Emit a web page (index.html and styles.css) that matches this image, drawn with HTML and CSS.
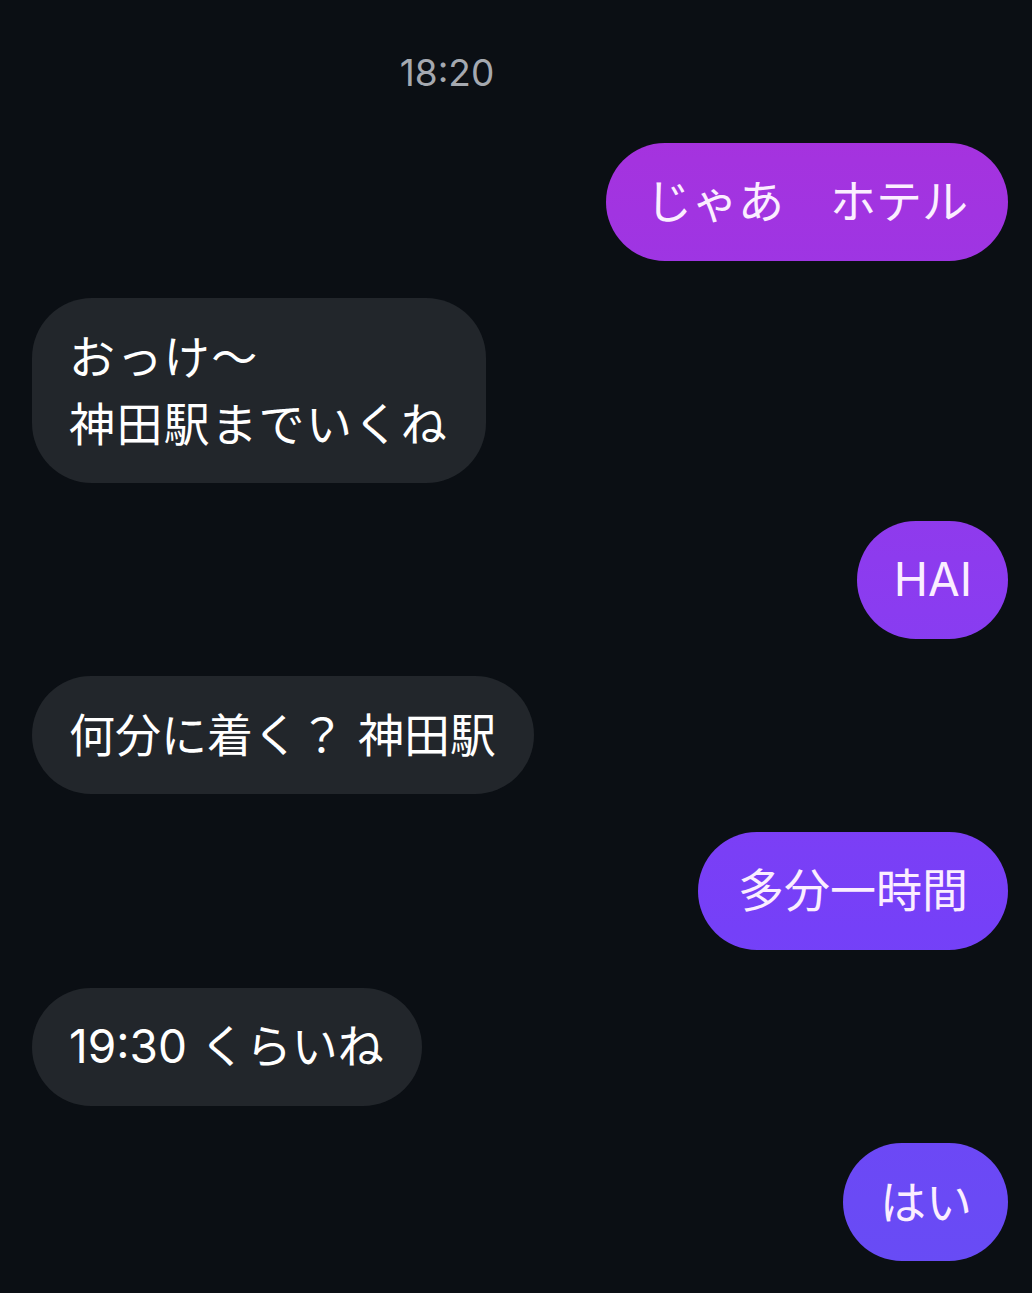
FILE: index.html
```html
<!DOCTYPE html>
<html lang="ja">
<head>
    <meta charset="utf-8">
    <meta name="viewport" content="width=device-width, initial-scale=1.0">
    <title>Chat</title>
    <link rel="stylesheet" href="styles.css">
</head>
<body>
    <div id="chat">
        <div class="time">18:20</div>
        <div class="bubble sent">じゃあ　ホテル</div>
        <div class="bubble received wide">おっけ～<br>神田駅までいくね</div>
        <div class="bubble sent short">HAI</div>
        <div class="bubble received">何分に着く？ 神田駅</div>
        <div class="bubble sent">多分一時間</div>
        <div class="bubble received">19:30 くらいね</div>
        <div class="bubble sent short">はい</div>
    </div>
</body>
</html>
```

FILE: styles.css
```css
body {
    margin: 0;
    padding: 0;
    background-color: #0b0f14;
    font-family: "Inter", "Noto Sans CJK JP", sans-serif;
    overflow: hidden;
}

#chat {
    display: flex;
    flex-direction: column;
    gap: 37.6px;
    padding: 50px 24px 0 32px;
    height: 1293px;
    box-sizing: border-box;
}

.time {
    align-self: stretch;
    padding-right: 146px;
    text-align: center;
    color: #a5a9b0;
    font-size: 37px;
    line-height: 46px;
    margin-bottom: 9px;
}

.bubble {
    font-size: 46px;
    line-height: 67px;
    padding: 25.5px 38px 25.5px 37px;
    border-radius: 60px;
    max-width: 70%;
    white-space: nowrap;
}

.received {
    align-self: flex-start;
    background-color: #22262b;
    color: #ffffff;
}

.received.wide {
    letter-spacing: 1.4px;
}

.sent {
    align-self: flex-end;
    color: #fbeeff;
    padding-left: 40px;
    padding-right: 40px;
    background: linear-gradient(to bottom, #ad2edb 0px, #a433df 160px, #8a3cf0 610px, #7540f8 930px, #6a4af5 1200px, #674cf5 1293px);
    background-attachment: fixed;
}

.sent.short {
    padding-left: 37px;
    padding-right: 36px;
}
```
